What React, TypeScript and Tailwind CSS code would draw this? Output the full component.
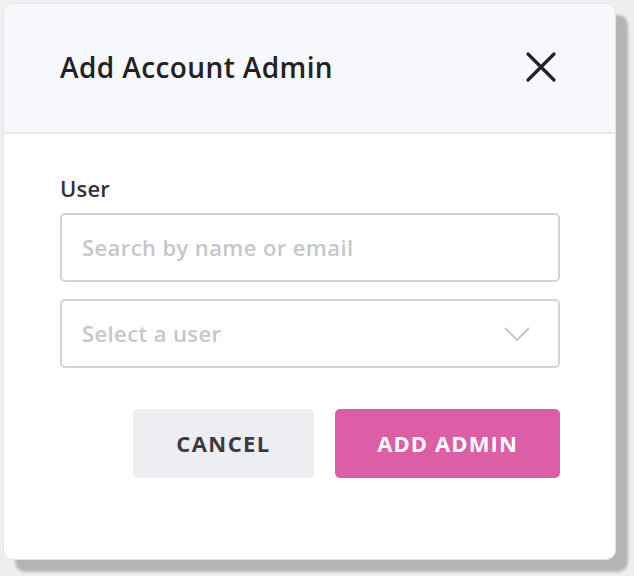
import React from "react";

const font = { fontFamily: "'Open Sans', 'Noto Sans', sans-serif" };

const App: React.FC = () => {
  return (
    <div className="w-[634px] h-[576px] bg-[#efefef] pt-[3px] pl-[3px]" style={font}>
      <div className="w-[613px] h-[557px] rounded-[10px] bg-white overflow-hidden flex flex-col border border-[#e6e6e6] shadow-[12px_12px_3px_#b4b4b4]">
        <div className="h-[130px] shrink-0 bg-[#f7f8fc] border-b-2 border-[#e8e9ee] flex items-center justify-between pl-[56px] pr-[58px]">
          <h1 className="text-[28px] font-semibold text-[#222222] tracking-[0.4px] -mt-[2px]">Add Account Admin</h1>
          <button className="w-[32px] h-[32px] flex items-center justify-center -mt-[2px]">
            <svg width="32" height="32" viewBox="0 0 32 32" fill="none">
              <path d="M3 3L29 29M29 3L3 29" stroke="#222222" strokeWidth="3.2" strokeLinecap="round" />
            </svg>
          </button>
        </div>
        <div className="flex flex-col pl-[56px] pr-[55px] pt-[41px]">
          <label className="text-[22px] font-semibold text-[#333333] leading-[26px] tracking-[0.2px]">User</label>
          <div className="mt-[12px] h-[69px] rounded-[5px] border-2 border-[#d3d4d8] flex items-center px-[20px]">
            <span className="text-[22px] font-semibold text-[#c6c7cc] tracking-[0.4px]">Search by name or email</span>
          </div>
          <div className="mt-[17px] h-[69px] rounded-[5px] border-2 border-[#d3d4d8] flex items-center justify-between pl-[20px] pr-[28px]">
            <span className="text-[22px] font-semibold text-[#c6c7cc] tracking-[0.4px]">Select a user</span>
            <svg width="26" height="14" viewBox="0 0 26 14" fill="none">
              <path d="M1 1L13 13L25 1" stroke="#c6c7cc" strokeWidth="2" />
            </svg>
          </div>
          <div className="mt-[41px] flex justify-end gap-[21px]">
            <button className="w-[181px] h-[69px] rounded-[5px] bg-[#edeef2] text-[22px] font-bold text-[#3b3b3b] tracking-[1.4px]">
              CANCEL
            </button>
            <button className="w-[225px] h-[69px] rounded-[5px] bg-[#db5ea6] text-[22px] font-bold text-white tracking-[1.1px]">
              ADD ADMIN
            </button>
          </div>
        </div>
      </div>
    </div>
  );
};

export default App;
